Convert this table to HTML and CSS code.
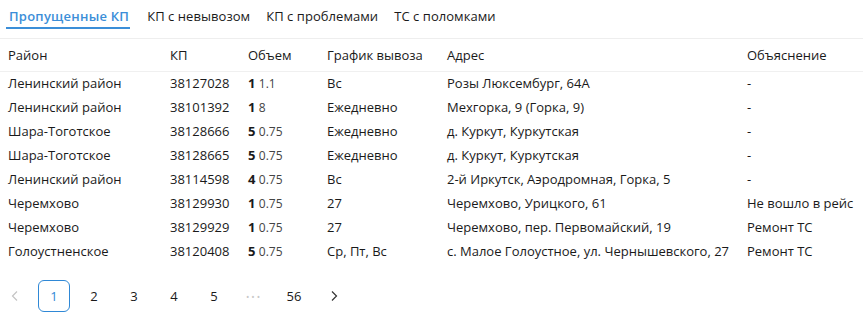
FILE: index.html
```html
<!DOCTYPE html>
<html lang="ru">
<head>
<meta charset="utf-8">
<link rel="stylesheet" href="styles.css">
</head>
<body>
<div class="page">
  <nav class="tabs">
    <div class="tab active">Пропущенные КП</div>
    <div class="tab">КП с невывозом</div>
    <div class="tab">КП с проблемами</div>
    <div class="tab">ТС с поломками</div>
  </nav>
  <table class="grid">
    <colgroup>
      <col class="c1"><col class="c2"><col class="c3"><col class="c4"><col class="c5"><col class="c6">
    </colgroup>
    <thead>
      <tr><th>Район</th><th>КП</th><th>Объем</th><th>График вывоза</th><th>Адрес</th><th>Объяснение</th></tr>
    </thead>
    <tbody>
      <tr><td>Ленинский район</td><td>38127028</td><td><b>1</b> <span class="vol">1.1</span></td><td>Вс</td><td>Розы Люксембург, 64А</td><td>-</td></tr>
      <tr><td>Ленинский район</td><td>38101392</td><td><b>1</b> <span class="vol">8</span></td><td>Ежедневно</td><td>Мехгорка, 9 (Горка, 9)</td><td>-</td></tr>
      <tr><td>Шара-Тоготское</td><td>38128666</td><td><b>5</b> <span class="vol">0.75</span></td><td>Ежедневно</td><td>д. Куркут, Куркутская</td><td>-</td></tr>
      <tr><td>Шара-Тоготское</td><td>38128665</td><td><b>5</b> <span class="vol">0.75</span></td><td>Ежедневно</td><td>д. Куркут, Куркутская</td><td>-</td></tr>
      <tr><td>Ленинский район</td><td>38114598</td><td><b>4</b> <span class="vol">0.75</span></td><td>Вс</td><td>2-й Иркутск, Аэродромная, Горка, 5</td><td>-</td></tr>
      <tr><td>Черемхово</td><td>38129930</td><td><b>1</b> <span class="vol">0.75</span></td><td>27</td><td>Черемхово, Урицкого, 61</td><td>Не вошло в рейс</td></tr>
      <tr><td>Черемхово</td><td>38129929</td><td><b>1</b> <span class="vol">0.75</span></td><td>27</td><td>Черемхово, пер. Первомайский, 19</td><td>Ремонт ТС</td></tr>
      <tr><td>Голоустненское</td><td>38120408</td><td><b>5</b> <span class="vol">0.75</span></td><td>Ср, Пт, Вс</td><td>с. Малое Голоустное, ул. Чернышевского, 27</td><td>Ремонт ТС</td></tr>
    </tbody>
  </table>
  <div class="pager">
    <div class="pg prev"><svg width="12" height="12" viewBox="0 0 12 12"><path d="M8 1.5 L3.5 6 L8 10.5" fill="none" stroke="#c4c4c4" stroke-width="1.2"/></svg></div>
    <div class="pg current">1</div>
    <div class="pg">2</div>
    <div class="pg">3</div>
    <div class="pg">4</div>
    <div class="pg">5</div>
    <div class="pg dots">•••</div>
    <div class="pg">56</div>
    <div class="pg next"><svg width="12" height="12" viewBox="0 0 12 12"><path d="M4 1.5 L8.5 6 L4 10.5" fill="none" stroke="#333" stroke-width="1.2"/></svg></div>
  </div>
</div>
</body>
</html>
```
FILE: styles.css
```css
* { box-sizing: border-box; }
html, body { margin: 0; padding: 0; background: #fff; }
body {
  font-family: "Open Sans", "Noto Sans", sans-serif;
  font-size: 13px;
  color: #1a1a1a;
  width: 863px;
  overflow: hidden;
}
.page { width: 863px; overflow: hidden; }
.tabs {
  display: flex;
  gap: 16px;
  height: 39px;
  padding-left: 9px;
  border-bottom: 1px solid #eeeeee;
}
.tab {
  height: 29px;
  padding-top: 7px;
  line-height: 19px;
  white-space: nowrap;
  color: #1a1a1a;
  letter-spacing: 0.05px;
}
.tab.active {
  color: #3b8ed8;
  font-weight: 600;
  letter-spacing: 0.25px;
  border-bottom: 2px solid #3b8ed8;
  margin-left: -3px;
  margin-right: 1px;
  padding: 7px 1px 0 3px;
}
.grid {
  border-collapse: collapse;
  table-layout: fixed;
  width: 1000px;
}
.c1 { width: 162px; }
.c2 { width: 78px; }
.c3 { width: 79px; }
.c4 { width: 120px; }
.c5 { width: 300px; }
.c6 { width: 261px; }
th {
  text-align: left;
  font-weight: 400;
  height: 32px;
  padding: 0 8px;
  border-bottom: 1px solid #f0f0f0;
  white-space: nowrap;
}
td {
  height: 24px;
  padding: 0 8px;
  white-space: nowrap;
}
td b { font-weight: 700; }
.vol { font-size: 12px; color: #444; }
.pager {
  display: flex;
  gap: 8px;
  margin-top: 17px;
  align-items: center;
}
.pg {
  width: 32px;
  height: 32px;
  display: flex;
  align-items: center;
  justify-content: center;
  font-size: 13px;
  color: #1a1a1a;
}
.pg.prev { width: 30px; }
.pg.current {
  border: 1px solid #2f88d6;
  border-radius: 6px;
  color: #2f88d6;
}
.pg.dots { color: #c8c8c8; font-size: 9px; letter-spacing: 2px; }
```
